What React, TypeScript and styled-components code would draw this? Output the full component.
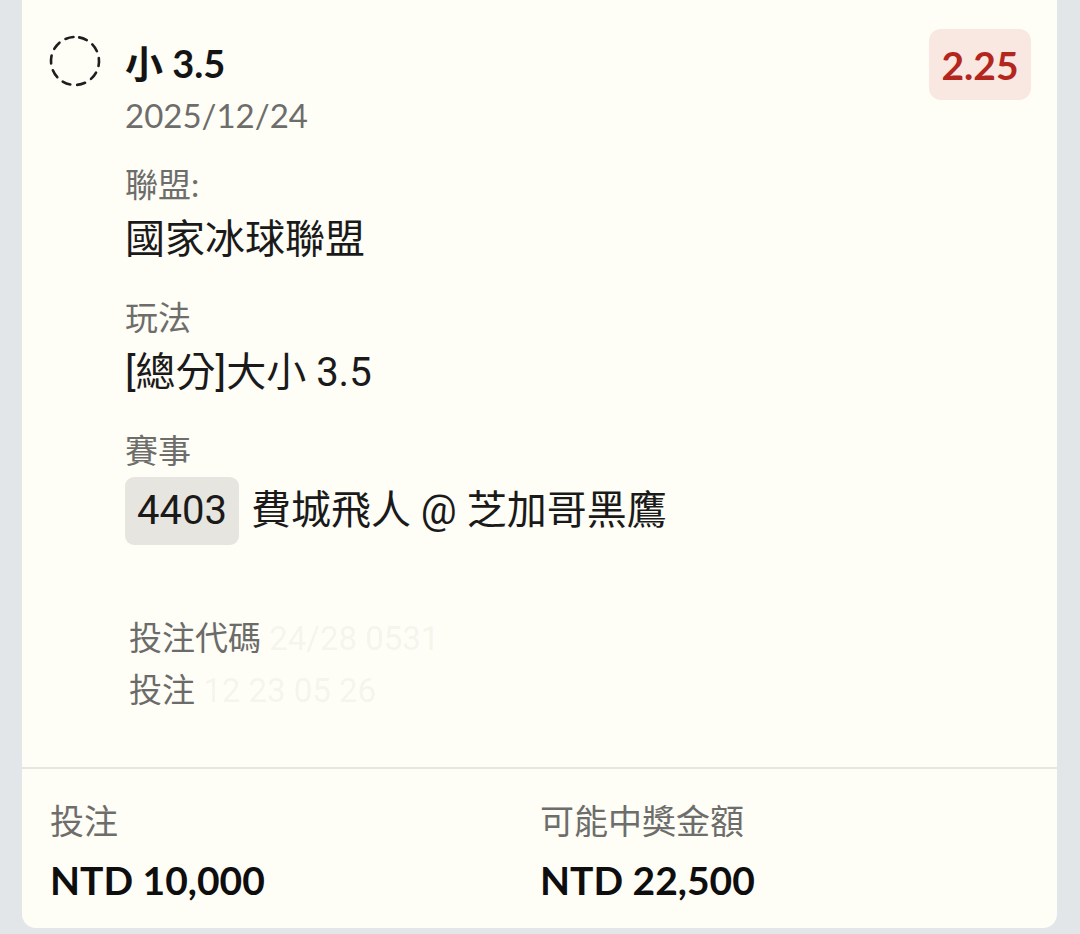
import * as React from "react";
import styled, { createGlobalStyle } from "styled-components";

const GlobalStyle = createGlobalStyle`
  html, body {
    margin: 0;
    padding: 0;
    background: #e3e6e8;
  }
  body {
    width: 1080px;
    height: 934px;
    overflow: hidden;
  }
`;

const LATO = `"Lato", "Noto Sans CJK TC", sans-serif`;
const ROBOTO = `"Roboto", "Noto Sans CJK TC", sans-serif`;

const SPage = styled.div`
  padding: 0 23px 7px 22px;
`;

const SCard = styled.div`
  background: #fefdf6;
  border-radius: 0 0 14px 14px;
  overflow: hidden;
`;

const SBody = styled.div`
  padding: 29px 26px 50px 26px;
`;

const SHeaderRow = styled.div`
  display: flex;
  align-items: flex-start;
`;

const SStatusIcon = styled.svg`
  flex: none;
  width: 54px;
  height: 54px;
  margin-top: 5px;
  margin-right: 23px;
`;

const SContent = styled.div`
  flex: 1;
  display: flex;
  flex-direction: column;
`;

const STitle = styled.div`
  font-family: ${LATO};
  font-weight: 700;
  font-size: 38px;
  line-height: 44px;
  color: #141414;
  margin-top: 12px;
`;

const SDate = styled.div`
  font-family: ${LATO};
  font-size: 33px;
  line-height: 44px;
  color: #6d6d6b;
  margin-top: 8px;
`;

const SOdds = styled.div`
  flex: none;
  background: #f9e7e1;
  border-radius: 12px;
  height: 71px;
  width: 102px;
  display: flex;
  align-items: center;
  justify-content: center;
  font-family: ${LATO};
  font-weight: 700;
  font-size: 39px;
  color: #b3261e;
`;

const SLabel = styled.div<{ $gap: number }>`
  font-family: ${LATO};
  font-size: 33px;
  line-height: 40px;
  color: #6d6d6b;
  margin-top: ${({ $gap }) => $gap}px;
`;

const SValue = styled.div`
  font-family: ${ROBOTO};
  font-size: 40px;
  line-height: 48px;
  color: #1a1a1a;
  margin-top: 12px;
  display: flex;
  align-items: center;
  gap: 12px;
`;

const SMatchRow = styled(SValue)`
  margin-top: 7px;
`;

const SEventBadge = styled.span`
  background: #e7e5df;
  border-radius: 9px;
  height: 68px;
  padding: 0 12px;
  display: inline-flex;
  align-items: center;
`;

const SMeta = styled.div`
  margin: 68px 0 0 81px;
  display: flex;
  flex-direction: column;
`;

const SMetaLine = styled.div`
  font-family: ${ROBOTO};
  font-size: 33px;
  line-height: 52px;
  color: #6b6b69;
  white-space: nowrap;
`;

const SHidden = styled.span`
  color: rgba(120, 120, 115, 0.08);
`;

const SFooter = styled.div`
  border-top: 2px solid #e7e5df;
  display: grid;
  grid-template-columns: 490px 1fr;
  padding: 32px 28px 24px 28px;
`;

const SFooterCell = styled.div`
  display: flex;
  flex-direction: column;
  gap: 15px;
`;

const SFooterLabel = styled.div`
  font-family: ${LATO};
  font-size: 34px;
  line-height: 40px;
  color: #6d6d6b;
`;

const SAmount = styled.div`
  font-family: ${LATO};
  font-weight: 700;
  font-size: 39px;
  line-height: 48px;
  color: #0e0e0e;
`;

const DashedCircle = () => (
  <SStatusIcon viewBox="0 0 54 54">
    <circle
      cx="27"
      cy="27"
      r="24"
      fill="none"
      stroke="#1e1e1e"
      strokeWidth="2.6"
      strokeDasharray="8.1 7"
      strokeLinecap="round"
      transform="rotate(-80 27 27)"
    />
  </SStatusIcon>
);

export default function App() {
  return (
    <>
      <GlobalStyle />
      <SPage>
        <SCard>
          <SBody>
            <SHeaderRow>
              <DashedCircle />
              <SContent>
                <STitle>小 3.5</STitle>
                <SDate>2025/12/24</SDate>
                <SLabel $gap={27}>聯盟:</SLabel>
                <SValue>國家冰球聯盟</SValue>
                <SLabel $gap={33}>玩法</SLabel>
                <SValue>[總分]大小 3.5</SValue>
                <SLabel $gap={33}>賽事</SLabel>
                <SMatchRow>
                  <SEventBadge>4403</SEventBadge>
                  <span>費城飛人 @ 芝加哥黑鷹</span>
                </SMatchRow>
              </SContent>
              <SOdds>2.25</SOdds>
            </SHeaderRow>
            <SMeta>
              <SMetaLine>
                投注代碼<SHidden> 24/28 0531 </SHidden>
              </SMetaLine>
              <SMetaLine>
                投注<SHidden> 12 23 05 26</SHidden>
              </SMetaLine>
            </SMeta>
          </SBody>
          <SFooter>
            <SFooterCell>
              <SFooterLabel>投注</SFooterLabel>
              <SAmount>NTD 10,000</SAmount>
            </SFooterCell>
            <SFooterCell>
              <SFooterLabel>可能中獎金額</SFooterLabel>
              <SAmount>NTD 22,500</SAmount>
            </SFooterCell>
          </SFooter>
        </SCard>
      </SPage>
    </>
  );
}
